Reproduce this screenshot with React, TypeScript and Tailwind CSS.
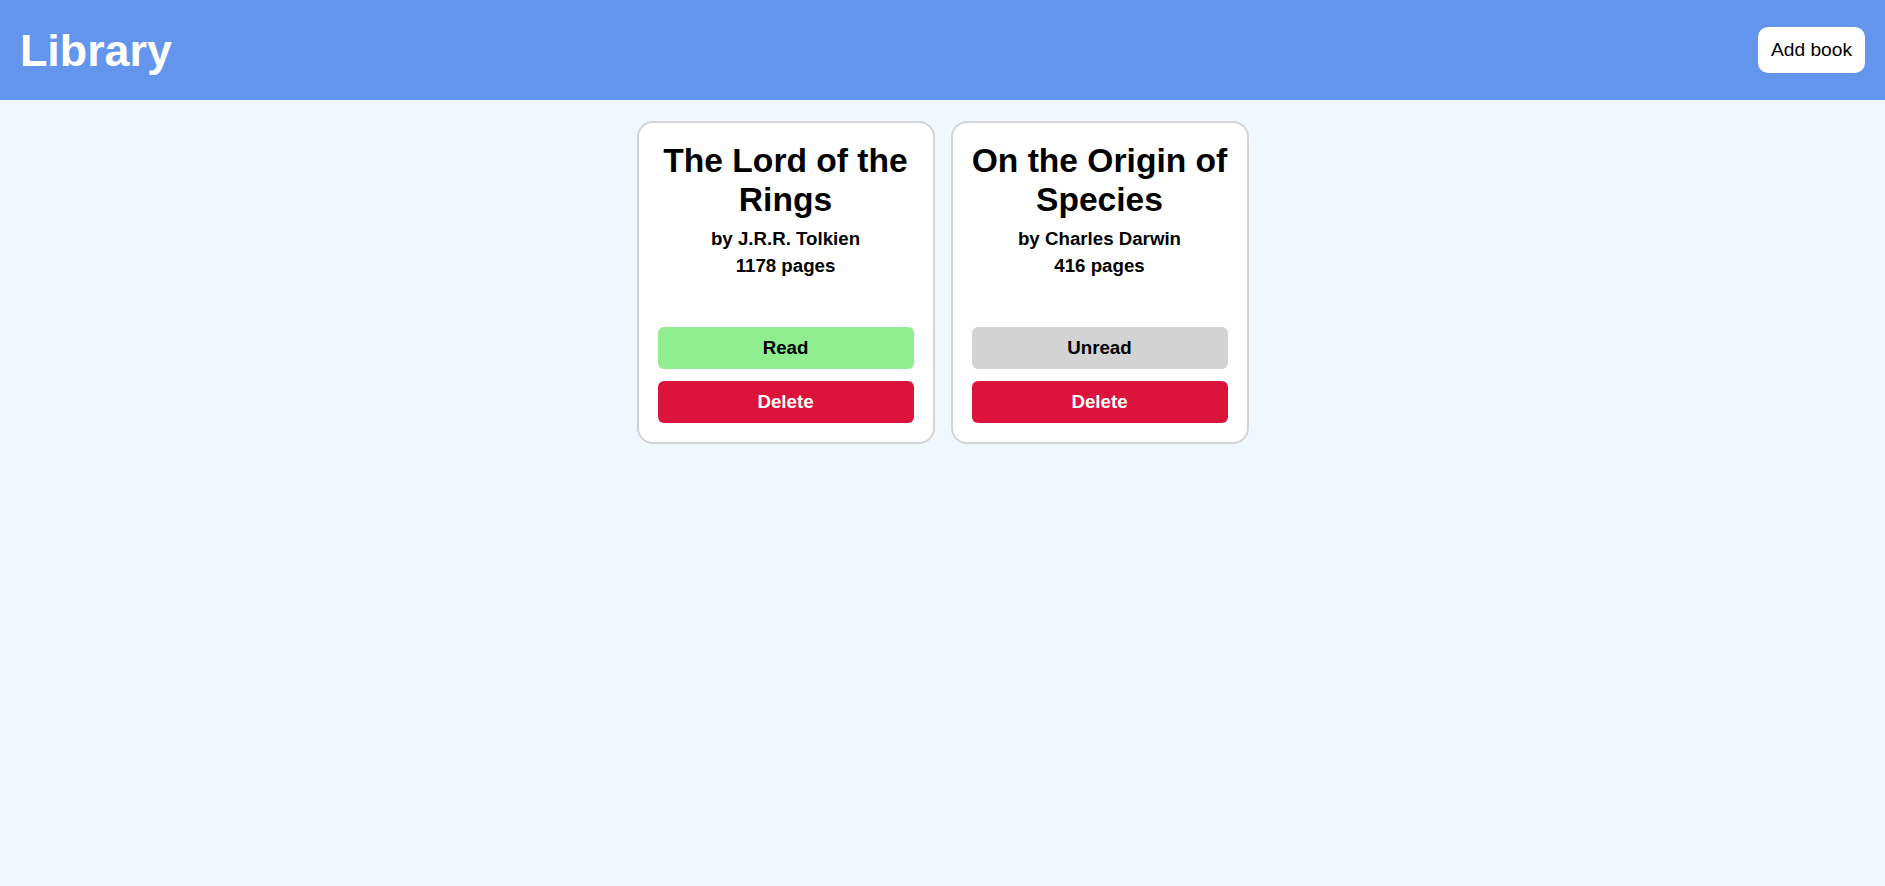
import React from "react";

type Book = { title: string; author: string; pages: number; read: boolean };

const books: Book[] = [
  { title: "The Lord of the Rings", author: "J.R.R. Tolkien", pages: 1178, read: true },
  { title: "On the Origin of Species", author: "Charles Darwin", pages: 416, read: false },
];

function Card({ b }: { b: Book }) {
  return (
    <div className="w-[298px] bg-white border-2 border-[#d3d3d3] rounded-[16px] px-[19px] pt-[18px] pb-[19px] flex flex-col">
      <div className="-mx-[6px] text-[33.6px] font-bold leading-[39px] text-center text-black">{b.title}</div>
      <div className="mt-[6px] text-[18.7px] font-bold leading-[27px] text-center text-black">by {b.author}</div>
      <div className="text-[18.7px] font-bold leading-[27px] text-center text-black">{b.pages} pages</div>
      <button
        className={
          "mt-[48px] h-[42px] w-full rounded-[6px] text-[18.7px] font-bold text-black flex items-center justify-center " +
          (b.read ? "bg-[#90ee90]" : "bg-[#d3d3d3]")
        }
      >
        {b.read ? "Read" : "Unread"}
      </button>
      <button className="mt-[12px] h-[42px] w-full rounded-[6px] text-[18.7px] font-bold text-white bg-[#dc143c] flex items-center justify-center">
        Delete
      </button>
    </div>
  );
}

export default function App() {
  return (
    <div className="min-h-screen bg-[#f0f8ff]" style={{ fontFamily: '"Liberation Sans", Arial, sans-serif' }}>
      <header className="h-[100px] bg-[#6495ed] flex items-center justify-between px-[20px]">
        <h1 className="text-[44.8px] font-bold text-white leading-[normal]">Library</h1>
        <button className="bg-white text-black text-[19.2px] leading-[22px] px-[13px] py-[12px] rounded-[10px]">
          Add book
        </button>
      </header>
      <main className="flex justify-center gap-[16px] pt-[21px]">
        {books.map((b) => (
          <Card key={b.title} b={b} />
        ))}
      </main>
    </div>
  );
}
